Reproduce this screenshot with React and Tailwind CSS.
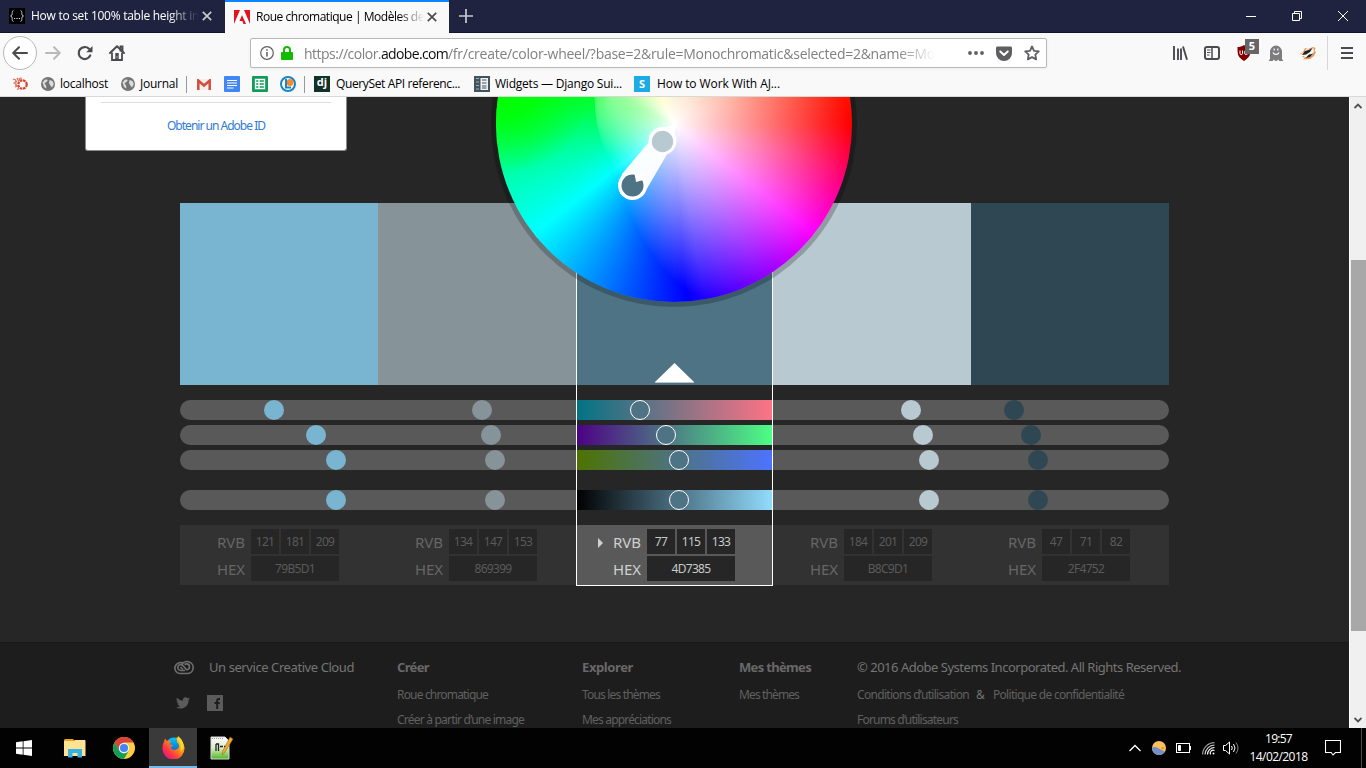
import { useLayoutEffect, useRef } from "react";

/* Single-line label whose tracking is adjusted so that it spans `w` pixels. */
function Label({ w, className = "", children }) {
  const ref = useRef(null);
  useLayoutEffect(() => {
    const el = ref.current;
    el.style.letterSpacing = "0px";
    const natural = el.getBoundingClientRect().width;
    el.style.letterSpacing = `${(w - natural) / el.textContent.length}px`;
  }, [w, children]);
  return (
    <span ref={ref} className={`inline-block shrink-0 whitespace-pre ${className}`}>
      {children}
    </span>
  );
}

/* ---------- Browser chrome ---------- */

function CloseX({ className }) {
  return (
    <svg className={className} width="10" height="10" viewBox="0 0 10 10" fill="none" stroke="currentColor" strokeWidth="1.7">
      <path d="M.8.8l8.4 8.4M9.2.8L.8 9.2" />
    </svg>
  );
}

function TitleBar() {
  return (
    <div className="flex h-[33px] shrink-0 bg-[#20233f] text-[12px]">
      <div className="flex h-full w-[225px] items-center border-b border-[#12142a] pl-[9px] text-white">
        <svg width="16" height="16" viewBox="0 0 16 16">
          <rect width="16" height="16" fill="#000" />
          <path d="M4.500 2.500C2.500 2.500 3.500 6 3 7L1.500 8 3 9c.5 1-.5 4.500 1.500 4.500M11.500 2.500c2 0 1 3.500 1.500 4.500l1.500 1-1.500 1c-.5 1 .5 4.500-1.500 4.500" fill="none" stroke="#bbb" />
          <path d="M5 10.500h1.200M7.400 10.500h1.200M9.800 10.500h1.200" stroke="#ddd" />
        </svg>
        <div className="ml-[6px] w-[168px] overflow-hidden [mask-image:linear-gradient(to_right,#000_82%,transparent_100%)]">
          <Label w={168}>How to set 100% table height in</Label>
        </div>
        <CloseX className="ml-[3px] text-[#c9cad2]" />
      </div>
      <div className="flex h-full w-[224px] items-center border-t-2 border-[#0a84ff] bg-[#f9f9fa] pb-[2px] pl-[9px] text-black">
        <svg width="16" height="14" viewBox="0 0 16 14">
          <rect width="16" height="14" fill="#fff" />
          <path d="M0 0h6L0 14zM10 0h6v14zM8 5l4 9H9.500l-1.200-3H5.500z" fill="#e1141e" />
        </svg>
        <div className="ml-[6px] w-[168px] overflow-hidden [mask-image:linear-gradient(to_right,#000_85%,transparent_100%)]">
          <Label w={168}>Roue chromatique | Modèles de</Label>
        </div>
        <CloseX className="ml-[3px] text-[#4a4a4f]" />
      </div>
      <div className="flex grow items-center border-b border-[#12142a] pl-[10px] text-white">
        <svg width="14" height="14" viewBox="0 0 14 14" stroke="#c9cad2" strokeWidth="1.700">
          <path d="M7 0v14M0 7h14" />
        </svg>
        <div className="mr-[18px] ml-auto flex items-center gap-[36px]">
          <svg width="10" height="10" viewBox="0 0 10 10"><path d="M0 5.500h10" stroke="#fff" /></svg>
          <svg width="10" height="10" viewBox="0 0 10 10" fill="none" stroke="#fff"><path d="M.5 2.500h7v7h-7zM2.500 2.500v-2h7v7h-2" /></svg>
          <svg width="10" height="10" viewBox="0 0 10 10" stroke="#fff"><path d="M0 0l10 10M10 0L0 10" /></svg>
        </div>
      </div>
    </div>
  );
}

function NavBar() {
  return (
    <div className="flex h-[40px] shrink-0 items-center text-[#4a4a4f]">
      <div className="ml-[3px] flex size-[34px] items-center justify-center rounded-full border border-[#b8b8b8] bg-white">
        <svg width="16" height="14" viewBox="0 0 16 14" fill="none" stroke="currentColor" strokeWidth="2" strokeLinecap="round" strokeLinejoin="round"><path d="M15 7H1.500M7 1.200L1.200 7 7 12.800" /></svg>
      </div>
      <svg className="ml-[8px] text-[#b9b9bb]" width="16" height="14" viewBox="0 0 16 14" fill="none" stroke="currentColor" strokeWidth="2" strokeLinecap="round" strokeLinejoin="round"><path d="M1 7h13.500M9 1.200L14.800 7 9 12.800" /></svg>
      <svg className="ml-[16px]" width="16" height="16" viewBox="0 0 16 16"><path d="M13.200 10.500A6 6 0 1 1 12 3.800" fill="none" stroke="currentColor" strokeWidth="2.200" strokeLinecap="round" /><path d="M15.500 1v6.300H9.200z" fill="currentColor" /></svg>
      <svg className="ml-[16px]" width="16" height="16" viewBox="0 0 16 16"><path d="M1 8l7-6.700L15 8" fill="none" stroke="currentColor" strokeWidth="2" strokeLinecap="round" strokeLinejoin="round" /><path d="M11.500 1.500h2v4h-2zM3 7.500V15h10V7.500" fill="none" stroke="currentColor" strokeWidth="1.800" /><path d="M6.300 8h3.400v8H6.300z" fill="currentColor" /><path d="M7.500 11.500h1v1h-1z" fill="#fff" /></svg>
      <div className="ml-[125px] flex h-[30px] w-[797px] items-center rounded-[2px] border border-[#b8b8b8] bg-white pl-[9px] text-[14px] text-[#808080] shadow-[0_1px_3px_rgba(0,0,0,.06)]">
        <svg width="14" height="14" viewBox="0 0 14 14" fill="none" stroke="#5f5f62"><circle cx="7" cy="7" r="6.300" strokeWidth="1.200" /><path d="M7 6v4.500M7 3.200v1.500" strokeWidth="1.500" /></svg>
        <svg className="ml-[7px]" width="12" height="14" viewBox="0 0 12 14"><path d="M3 7V4a3 3 0 0 1 6 0v3" fill="none" stroke="#12bc00" strokeWidth="2" /><rect y="6" width="12" height="8" rx="1" fill="#12bc00" /></svg>
        <div className="ml-[11px] flex w-[631px] overflow-hidden [mask-image:linear-gradient(to_right,#000_94%,transparent_100%)]">
          <Label w={77}>https://color.</Label>
          <Label w={67} className="text-[#0c0c0d]">adobe.com</Label>
          <Label w={487}>/fr/create/color-wheel/?base=2&rule=Monochromatic&selected=2&name=Mo</Label>
        </div>
        <svg className="ml-[33px]" width="16" height="4" viewBox="0 0 16 4" fill="#5f5f62"><circle cx="2" cy="2" r="1.900" /><circle cx="8" cy="2" r="1.900" /><circle cx="14" cy="2" r="1.900" /></svg>
        <svg className="ml-[12px]" width="16" height="15" viewBox="0 0 16 15"><path d="M1.500.5h13c.8 0 1.500.6 1.500 1.500v5a8 8 0 0 1-16 0V2C0 1.100.7.500 1.500.500z" fill="#5f5f62" /><path d="M4.300 5.500L8 9l3.700-3.500" fill="none" stroke="#fff" strokeWidth="2" strokeLinecap="round" strokeLinejoin="round" /></svg>
        <svg className="ml-[12px]" width="16" height="16" viewBox="0 0 16 16"><path d="M8 1.500l2 4.300 4.800.6-3.500 3.200.9 4.800L8 12.100l-4.200 2.300.9-4.800L1.200 6.400 6 5.800z" fill="none" stroke="#5f5f62" strokeWidth="1.800" strokeLinejoin="round" /></svg>
      </div>
      <svg className="ml-[126px]" width="15" height="14" viewBox="0 0 15 14" stroke="currentColor"><path d="M1 0v14M5 2.500V14M8 2.500V14M10 .5l4 13.200" strokeWidth="1.900" /></svg>
      <svg className="ml-[16px]" width="16" height="14" viewBox="0 0 16 14" fill="none" stroke="currentColor"><rect x="1" y="1" width="14" height="12" rx="2" strokeWidth="2" /><path d="M8 1v12" strokeWidth="1.500" /><path d="M3 4h3.500M3 6.500h3.500M3 9h2.500" /></svg>
      <div className="relative ml-[16px] h-[16px] w-[16px]">
        <svg width="16" height="16" viewBox="0 0 16 16"><path d="M8 0c2 1.500 4 2 6.500 2 0 7 0 10-6.500 14C1.500 12 1.500 9 1.500 2 4 2 6 1.500 8 0z" fill="#800000" /><path d="M4 5.500v3c0 1.500 2.500 1.500 2.500 0v-3M11.500 6c-2.500-1-3 0-3 1.500s.5 2.500 3 1.500" fill="none" stroke="#fff" strokeWidth="1" /></svg>
        <span className="absolute -top-[6px] left-[9px] flex h-[15px] w-[14px] items-center justify-center bg-[#666] text-[11px] font-bold text-white">5</span>
      </div>
      <svg className="ml-[16px]" width="16" height="16" viewBox="0 0 16 16"><path d="M2 7a6 6.500 0 0 1 12 0v7l1.300 2h-4l-1-1.500L8.500 16h-1l-1.800-1.500-1 1.500h-4L2 14z" fill="#7c7c7e" /><path d="M6.200 3.500v2M9.800 3.500v2M5 7.500c1 2.500 5 2.500 6 0" stroke="#fff" strokeWidth="1.200" fill="none" /></svg>
      <svg className="ml-[16px]" width="16" height="14" viewBox="0 0 16 14"><path d="M0 8l3-2 2-4 3 1 5-2 2.500 1-1 3 1.500 1-2 4-4 3-7 .5 2-2-3-.5 2-1.500z" fill="#f0954a" /><path d="M1 8l3.500-2L6 3l3 .5L13.500 2 14 7l-4.500 4-4 .5z" fill="#f4f4f4" /><path d="M5 5l3.500-1L12.500 2 10 6 6 8.500 2 9zM14.500 6L10 11l-4.500 1L9 8.500 12 8z" fill="#222" /></svg>
      <div className="ml-[11px] h-[34px] w-px bg-[#d7d7db]" />
      <svg className="ml-[13px]" width="12" height="12" viewBox="0 0 12 12" stroke="currentColor" strokeWidth="2"><path d="M0 1h12M0 6h12M0 11h12" /></svg>
    </div>
  );
}

function Globe({ className }) {
  return (
    <svg className={className} width="14" height="14" viewBox="0 0 14 14">
      <circle cx="7" cy="7" r="7" fill="#747474" />
      <path d="M1.500 5.500L4 2.500l3 .2L5.500 5l-2 1.200L5 8.500l.5 3L3 10zM8.500 3l3 1 1.300 3-1.800 3.500-1.700-2L8 6z" fill="#dcdcdc" />
    </svg>
  );
}

function Bookmarks() {
  return (
    <div className="flex h-[24px] shrink-0 items-center border-b border-[#d8d8d8] pb-px pl-[12px] text-[12px] text-black">
      <svg width="16" height="14" viewBox="0 0 16 14" fill="none"><circle cx="10.500" cy="7.500" r="4.200" stroke="#d2452c" strokeWidth="2.200" strokeDasharray="2.600 .7" /><path d="M1 2l3 1M1.500 6h3M3 10l3-1M5 1l1.500 3M9 .5v2M5 12.500l2-1M3 4l2 .5M7 1l1 2M3 8h2" stroke="#e06b4c" strokeWidth="1.300" /></svg>
      <Globe className="ml-[13px]" />
      <Label w={48} className="ml-[5px]">localhost</Label>
      <Globe className="ml-[13px]" />
      <Label w={38} className="ml-[5px]">Journal</Label>
      <div className="ml-[8px] h-[17px] w-px bg-[#999]" />
      <svg className="ml-[10px]" width="14" height="11" viewBox="0 0 14 11"><rect width="14" height="11" fill="#efefef" /><path d="M1.300 11V1.500L7 6.500l5.700-5V11" fill="none" stroke="#d54b3d" strokeWidth="2.500" /></svg>
      <svg className="ml-[13px]" width="16" height="16" viewBox="0 0 16 16"><rect width="16" height="16" rx="1" fill="#4285f4" /><path d="M3 4.500h10M3 7h10M3 9.500h10M3 12h6.500" stroke="#fff" strokeWidth="1.200" /></svg>
      <svg className="ml-[12px]" width="16" height="16" viewBox="0 0 16 16"><rect width="16" height="16" rx="1" fill="#0f9d58" /><path d="M3.500 3.500h9v9h-9zM3.500 6.500h9M3.500 9.500h9M7 3.500v9" fill="none" stroke="#fff" strokeWidth="1.300" /></svg>
      <svg className="ml-[12px]" width="16" height="16" viewBox="0 0 16 16"><circle cx="8" cy="8" r="7" fill="#fff" stroke="#1684c8" strokeWidth="2" /><circle cx="10" cy="6.500" r="3.500" fill="#f58a2c" /><path d="M6 3v8.500h5" fill="none" stroke="#1684c8" strokeWidth="2" /></svg>
      <div className="ml-[8px] h-[17px] w-px bg-[#999]" />
      <div className="ml-[9px] flex size-[16px] items-center justify-center bg-[#113228] pb-[3px] text-[11px] font-bold text-white">dj</div>
      <Label w={124} className="ml-[6px]">QuerySet API referenc...</Label>
      <svg className="ml-[14px]" width="16" height="16" viewBox="0 0 16 16"><rect width="16" height="16" fill="#44545f" /><path d="M6.500 2h7.500v12H6.500z" fill="#eef1f3" /><path d="M2 2.500h3M2 6h3M2 9.500h3M2 13h3" stroke="#9fb0bb" /><path d="M8 4h4.500M8 7h4.500M8 10h4.500M8 12h4.500" stroke="#44545f" /></svg>
      <Label w={127} className="ml-[5px]">Widgets — Django Sui...</Label>
      <div className="ml-[12px] flex size-[16px] items-center justify-center bg-[#1cabe2] text-[11px] font-bold text-white">S</div>
      <Label w={123} className="ml-[7px]">How to Work With AJ...</Label>
    </div>
  );
}

/* ---------- Colour wheel ---------- */

/* Outline at which colours become fully saturated: [angle clockwise from the right, radius]. */
const SATURATION_EDGE = [
  [0, 178], [15, 178], [30, 178], [45, 178], [60, 178], [72, 178], [80, 178], [85, 170], [90, 158], [95, 146], [102, 129],
  [109, 114], [116, 102], [122, 94], [130, 85], [138, 79], [144, 76], [150, 75], [158, 74], [165, 74], [173, 75], [180, 77], [190, 80], [199, 84],
  [206, 95], [214, 110], [225, 135], [238, 162], [252, 178], [270, 178], [290, 178], [310, 178], [335, 178],
];
const EDGE_PATH =
  SATURATION_EDGE.map(([a, r], i) => {
    const t = (a * Math.PI) / 180;
    return `${i ? "L" : "M"}${(r * Math.cos(t)).toFixed(1)} ${(r * Math.sin(t)).toFixed(1)}`;
  }).join("") + "Z";
const STEPS = 160;
const FADE = Array.from({ length: STEPS }, (_, i) => {
  const t = 1 - i / STEPS;
  const v = Math.round(255 * (1 - t));
  return { t, fill: `rgb(${v},${v},${v})` };
});

function ColorWheel() {
  return (
    <div className="absolute -top-[151px] left-[496px] size-[356px] rounded-full bg-[conic-gradient(#ffa800_0deg,#ff0000_90deg,#ff00ff_128deg,#0000ff_176deg,#00ffff_232deg,#00ff00_298deg,#ffff00_334deg,#ffa800_360deg)] shadow-[0_0_0_5px_rgba(0,0,0,.22)]">
      <svg className="rounded-full" width="356" height="356" viewBox="-178 -178 356 356">
        <defs>
          <mask id="fade" maskUnits="userSpaceOnUse" x="-178" y="-178" width="356" height="356">
            {FADE.map(({ t, fill }) => (
              <path key={t} d={EDGE_PATH} fill={fill} transform={`scale(${t})`} />
            ))}
          </mask>
          <clipPath id="edge"><path d={EDGE_PATH} /></clipPath>
          <radialGradient id="lime">
            <stop offset="0" stopColor="#0f0" />
            <stop offset=".4" stopColor="#0f0" stopOpacity=".85" />
            <stop offset="1" stopColor="#0f0" stopOpacity="0" />
          </radialGradient>
          <radialGradient id="pale">
            <stop offset="0" stopColor="#fff" stopOpacity=".4" />
            <stop offset="1" stopColor="#fff" stopOpacity="0" />
          </radialGradient>
        </defs>
        <circle cx="-172" cy="-42" r="92" fill="url(#lime)" />
        <rect x="-178" y="-178" width="356" height="356" fill="#fff" mask="url(#fade)" />
        <g clipPath="url(#edge)"><circle cx="-62" cy="-24" r="56" fill="url(#pale)" /></g>
        <path d="M2-1L-15 6-52 50-54 70-29 68-1 20z" fill="#fff" fillOpacity=".96" />
        <circle cx="-11.500" cy="17" r="14" fill="#fff" />
        <circle cx="-11.500" cy="17.500" r="10.700" fill="#b8c9d1" />
        <circle cx="-41.500" cy="61.500" r="14.500" fill="#fff" />
        <circle cx="-41.500" cy="61.500" r="11" fill="#4d7385" />
        <path d="M-39.500 49.500l1.500 8.500 7.500-2-2-4z" fill="#fff" />
      </svg>
    </div>
  );
}

/* ---------- Theme columns ---------- */

const THEME = [
  { hex: "79B5D1", rgb: [121, 181, 209], knobs: ["ml-[84px]", "ml-[126px]", "ml-[146px]", "ml-[146px]"], bg: "bg-[#79b5d1]", w: "w-[198px]", end: "rounded-l-full" },
  { hex: "869399", rgb: [134, 147, 153], knobs: ["ml-[94px]", "ml-[103px]", "ml-[107px]", "ml-[107px]"], bg: "bg-[#869399]", w: "w-[198px]", end: "" },
  { hex: "4D7385", rgb: [77, 115, 133], knobs: ["ml-[54px]", "ml-[80px]", "ml-[93px]", "ml-[93px]"], bg: "bg-[#4d7385]", w: "w-[197px]", end: "", active: true },
  { hex: "B8C9D1", rgb: [184, 201, 209], knobs: ["ml-[128px]", "ml-[140px]", "ml-[146px]", "ml-[146px]"], bg: "bg-[#b8c9d1]", w: "w-[198px]", end: "" },
  { hex: "2F4752", rgb: [47, 71, 82], knobs: ["ml-[33px]", "ml-[50px]", "ml-[57px]", "ml-[57px]"], bg: "bg-[#2f4752]", w: "w-[198px]", end: "rounded-r-full" },
];
const TRACKS = [
  "bg-[linear-gradient(to_right,#007385,#ff7385)]",
  "bg-[linear-gradient(to_right,#4d0085,#4dff85)]",
  "bg-[linear-gradient(to_right,#4d7300,#4d73ff)]",
  "bg-[linear-gradient(to_right,#000,#93dcff)]",
];
const TRACK_GAP = ["mt-[15px]", "mt-[5px]", "mt-[5px]", "mt-[20px]"];

function Values({ c }) {
  const cell = `flex h-[25px] items-center justify-center bg-[#262626] pt-px text-[12px] tracking-[-0.7px] ${c.active ? "text-[#c8c8c8]" : "text-[#5a5a5a]"}`;
  const label = `flex h-[25px] w-[71px] items-center justify-end pr-[6px] text-[15px] ${c.active ? "text-[#cfcfcf]" : "text-[#666]"}`;
  return (
    <div className={`mt-[15px] flex h-[60px] flex-col gap-[2px] pt-[4px] ${c.active ? "bg-[#595959]" : "bg-[#323232]"}`}>
      <div className="flex gap-[2px]">
        <div className={`${label} -mr-[2px] pt-[2px]`}>
          {c.active && (
            <svg className="mr-[10px]" width="5" height="10" viewBox="0 0 5 10" fill="#d0d0d0"><path d="M0 0l5 5-5 5z" /></svg>
          )}
          <Label w={28}>RVB</Label>
        </div>
        {c.rgb.map((v) => (
          <div key={v} className={`${cell} w-[28px]`}>{v}</div>
        ))}
      </div>
      <div className="flex">
        <div className={`${label} pt-px`}><Label w={28}>HEX</Label></div>
        <div className={`${cell} w-[88px]`}>{c.hex}</div>
      </div>
    </div>
  );
}

function Theme() {
  return (
    <div className="ml-[180px] flex">
      {THEME.map((c) => (
        <div key={c.hex} className={`relative ${c.w}`}>
          <div className={`flex h-[182px] items-end justify-center pb-[2px] ${c.bg}`}>
            {c.active && (
              <svg width="39" height="20" viewBox="0 0 39 20"><path d="M19.500 0L39 19H0z" fill="#fff" /><path d="M0 19.500h39" stroke="#b9c5cb" /></svg>
            )}
          </div>
          {TRACKS.map((t, i) => (
            <div key={i} className={`flex h-[20px] ${TRACK_GAP[i]} ${c.active ? t : "bg-[#595959]"} ${c.end}`}>
              <div className={`size-[20px] rounded-full ${c.bg} ${c.knobs[i]} ${c.active ? "border border-white" : ""}`} />
            </div>
          ))}
          <Values c={c} />
          {c.active && <div className="absolute inset-x-0 top-0 -bottom-px border border-t-0 border-white" />}
        </div>
      ))}
    </div>
  );
}

function Footer() {
  const head = "h-[18px] text-[13px] leading-[18px] text-[#757575]";
  const bold = "h-[18px] text-[13px] leading-[18px] font-bold text-[#686868]";
  const link = "h-[16px] text-[12px] leading-[16px] text-[#606060]";
  return (
    <footer className="mt-[57px] flex h-[86px] items-start border-t border-[#181818] bg-[#1d1d1d] pt-[15px]">
      <div className="ml-[174px] flex w-[223px] flex-col">
        <div className="flex items-center">
          <svg width="20" height="16" viewBox="0 0 20 16" fill="none" stroke="#707070" strokeWidth="1.600"><path d="M7 14.500h6a6 6 0 1 0-5.500-8M7 14.500a5.500 5.500 0 1 1 2.500-10" /><path d="M11 11.500H6.500a3 3 0 1 1 2.500-5l3.500 4.200a3 3 0 1 0 0-6" /><path d="M9 10.500L6.500 8M10.500 5.500a3.500 3.500 0 0 1 5 1" /></svg>
          <Label w={145} className={`${head} ml-[15px]`}>Un service Creative Cloud</Label>
        </div>
        <div className="mt-[19px] ml-[2px] flex items-center text-[#5b5b5b]">
          <svg width="14" height="12" viewBox="0 0 24 20" fill="currentColor"><path d="M24 2.400a9 9 0 0 1-2.800.8A5 5 0 0 0 23.300.500a9 9 0 0 1-3.100 1.200A4.900 4.900 0 0 0 11.800 6 14 14 0 0 1 1.700 1a5 5 0 0 0 1.500 6.500A5 5 0 0 1 1 6.900a5 5 0 0 0 3.900 4.800 5 5 0 0 1-2.200.1 5 5 0 0 0 4.600 3.400A10 10 0 0 1 0 17.200 14 14 0 0 0 21.500 4.800 10 10 0 0 0 24 2.400z" /></svg>
          <svg className="ml-[17px]" width="16" height="16" viewBox="0 0 16 16"><rect width="16" height="16" fill="currentColor" /><path d="M13 4h-1.200c-1 0-1.600.5-1.600 1.700V14M7.500 8h5.200" fill="none" stroke="#1d1d1d" strokeWidth="2" /></svg>
        </div>
      </div>
      <div className="flex w-[185px] flex-col items-start">
        <Label w={32} className={bold}>Créer</Label>
        <Label w={91} className={`${link} mt-[11px]`}>Roue chromatique</Label>
        <Label w={127} className={`${link} mt-[9px]`}>Créer à partir d’une image</Label>
      </div>
      <div className="flex w-[157px] flex-col items-start">
        <Label w={51} className={bold}>Explorer</Label>
        <Label w={78} className={`${link} mt-[11px]`}>Tous les thèmes</Label>
        <Label w={89} className={`${link} mt-[9px]`}>Mes appréciations</Label>
      </div>
      <div className="flex w-[118px] flex-col items-start">
        <Label w={72} className={bold}>Mes thèmes</Label>
        <Label w={60} className={`${link} mt-[11px]`}>Mes thèmes</Label>
      </div>
      <div className="flex flex-col items-start">
        <Label w={324} className={head}>© 2016 Adobe Systems Incorporated. All Rights Reserved.</Label>
        <div className="mt-[11px] flex">
          <Label w={112} className={link}>Conditions d’utilisation</Label>
          <Label w={9} className={`${link} ml-[7px] text-[#707070]`}>&</Label>
          <Label w={131} className={`${link} ml-[8px]`}>Politique de confidentialité</Label>
        </div>
        <Label w={101} className={`${link} mt-[9px]`}>Forums d’utilisateurs</Label>
      </div>
    </footer>
  );
}

function Page() {
  return (
    <div className="flex h-[631px] shrink-0">
      <main className="relative h-full w-[1349px] overflow-hidden bg-[#262626] font-['Noto_Sans','Open_Sans',sans-serif]">
        <div className="h-[106px]">
          <div className="ml-[85px] h-[54px] w-[262px] rounded-b-[3px] border border-t-0 border-[#8c8c8c] bg-white pt-[5px]">
            <div className="mx-[15px] h-px bg-[#ddd]" />
            <div className="flex justify-center pt-[14px] text-[12px] leading-[18px] text-[#2f7bd4]">
              <Label w={98}>Obtenir un Adobe ID</Label>
            </div>
          </div>
        </div>
        <Theme />
        <Footer />
        <ColorWheel />
      </main>
      <div className="flex w-[17px] flex-col items-center border-l border-white bg-[#f0f0f0]">
        <svg className="mt-[6px]" width="8" height="6" viewBox="0 0 8 6" fill="none" stroke="#505050" strokeWidth="1.800"><path d="M.5 5L4 1.500 7.500 5" /></svg>
        <div className="mt-[151px] h-[371px] w-[15px] bg-[#a8a8a8]" />
        <svg className="mt-[86px]" width="8" height="6" viewBox="0 0 8 6" fill="none" stroke="#505050" strokeWidth="1.800"><path d="M.5 1L4 4.500 7.500 1" /></svg>
      </div>
    </div>
  );
}

/* ---------- Taskbar ---------- */

function Taskbar() {
  return (
    <div className="flex h-[40px] shrink-0 items-center bg-[#020202] text-white">
      <svg className="ml-[16px]" width="16" height="16" viewBox="0 0 16 16" fill="#fff"><path d="M0 2.300L6.700 1.300v6.300H0zM7.500 1.200L16 0v7.600H7.500zM0 8.400h6.700v6.300L0 13.700zM7.500 8.400H16V16l-8.500-1.200z" /></svg>
      <svg className="ml-[32px]" width="22" height="19" viewBox="0 0 22 19"><path d="M0 2V1l1-1h8l2 2z" fill="#e8a90c" /><path d="M0 2h10l1-1h10l.5 1v15H0z" fill="#ffe392" /><path d="M4 18.500V10h14v8.500h-4.500V14h-5v4.500z" fill="#35b1e8" /></svg>
      <svg className="ml-[27px]" width="22" height="22" viewBox="-11 -11 22 22"><circle r="11" fill="#ffcd40" /><path d="M-4.700 2.700L-9.500-5.500A11 11 0 0 1 9.600-5.500H0z" fill="#db4437" /><path d="M-9.500-5.500l4.800 8.200L0 5.500 4.700 2.700 0 11A11 11 0 0 1-9.500-5.500z" fill="#0f9d58" /><circle r="5.200" fill="#f1f1f1" /><circle r="4" fill="#4285f4" /></svg>
      <div className="ml-[14px] flex h-full w-[48px] items-center justify-center border-b-2 border-[#76b9ed] bg-[#3a3a3a]">
        <svg width="23" height="23" viewBox="0 0 23 23">
          <defs>
            <linearGradient id="fox" x1="1" y1="0" x2="0.100" y2="0.900"><stop offset="0" stopColor="#ffe920" /><stop offset=".4" stopColor="#ff980e" /><stop offset=".75" stopColor="#ff3647" /><stop offset="1" stopColor="#e31587" /></linearGradient>
            <linearGradient id="sea" x1="0" y1="0" x2="0" y2="1"><stop offset="0" stopColor="#00c8f8" /><stop offset="1" stopColor="#0a50c8" /></linearGradient>
          </defs>
          <circle cx="12" cy="10" r="8.500" fill="url(#sea)" />
          <path d="M2 5.500l1-3 2 2.500c2-1 3.500-.5 4 0L7.500 8.500l3.500.5-2.500 3c1.500 2 5 2.500 7.500.5 2-2 1-5-1-6 0-2 0-4-1-5 5 2 8 5 8.500 10.500A11 11 0 0 1 .5 13C.3 10 1 7.500 2 5.500z" fill="url(#fox)" />
          <path d="M16 0c4 3 6 7 5.500 12l-3 4c1-6-.5-11-3.500-13z" fill="#ffd52e" />
        </svg>
      </div>
      <svg className="ml-[13px]" width="24" height="24" viewBox="0 0 24 24"><defs><linearGradient id="note" x1="0" y1="0" x2="0" y2="1"><stop offset=".1" stopColor="#f7f9f5" /><stop offset=".5" stopColor="#ddecc8" /><stop offset="1" stopColor="#4db820" /></linearGradient></defs><path d="M1 1h14l4 4v18H1z" fill="url(#note)" stroke="#d8d8d8" /><path d="M2 2.500h12" stroke="#999" strokeDasharray="1 1" /><path d="M6 8v7M6 8h2.500v7M10 10.500h3M14 10.500h2" stroke="#222" strokeWidth="1.300" fill="none" /><path d="M20 1l3 2-8.500 14-2.500 2 .5-3.500z" fill="#efaa2d" stroke="#8c5c1c" strokeWidth=".5" /></svg>
      <div className="ml-auto flex h-full items-center">
        <svg width="12" height="8" viewBox="0 0 12 8" fill="none" stroke="#fff" strokeWidth="1.300"><path d="M.5 7L6 1.500 11.500 7" /></svg>
        <svg className="ml-[11px]" width="14" height="14" viewBox="0 0 14 14"><circle cx="7" cy="7" r="7" fill="#fbbf62" /><path d="M0 7c2-1.500 4-1 6 0s4 2.500 7 3.500A7 7 0 0 1 0 7z" fill="#7291c8" /><path d="M9 6.500l3.500-.3-1.500 2.500z" fill="#e68524" /></svg>
        <svg className="ml-[10px]" width="16" height="10" viewBox="0 0 16 10" fill="none" stroke="#fff"><rect x=".5" y=".5" width="13" height="9" /><path d="M14.500 3v4" /><path d="M2.500 2.500h2v5h-2z" fill="#fff" /></svg>
        <svg className="ml-[10px]" width="13" height="13" viewBox="0 0 13 13" fill="none" stroke="#fff" strokeWidth="1.200"><path d="M8.500 12.500A3 3 0 0 1 12.500 8.500" /><path d="M5.500 12.500A7 7 0 0 1 12.500 5.500" /><path d="M3 12.500A10 10 0 0 1 12.500 3" opacity=".8" /><path d="M.6 12.500A12 12 0 0 1 12.500.6" opacity=".6" /><circle cx="11.500" cy="11.500" r="1" fill="#fff" stroke="none" /></svg>
        <svg className="ml-[8px]" width="16" height="14" viewBox="0 0 16 14" fill="none" stroke="#fff"><path d="M.5 4.500h2l4-3.500v12l-4-3.500h-2z" /><path d="M8.500 5q1.500 2 0 4M10.500 3q3 4 0 8" /><path d="M13 1.500q4 5.500 0 11" opacity=".5" /></svg>
        <div className="ml-[10px] flex w-[59px] flex-col items-center text-[12px] leading-[18px]">
          <Label w={27}>19:57</Label>
          <Label w={58}>14/02/2018</Label>
        </div>
        <svg className="ml-[17px]" width="16" height="16" viewBox="0 0 16 16" fill="none" stroke="#fff" strokeWidth="1.100"><path d="M.5.500h15v12h-5L8 15l-1.800-2.500H.500z" /></svg>
        <div className="mr-[4px] ml-[20px] h-full w-px bg-[#4a4a4a]" />
      </div>
    </div>
  );
}

export default function App() {
  return (
    <div className="flex h-[768px] w-[1366px] flex-col overflow-hidden bg-[#f9f9fa] font-['Open_Sans','Noto_Sans',sans-serif]">
      <TitleBar />
      <NavBar />
      <Bookmarks />
      <Page />
      <Taskbar />
    </div>
  );
}
